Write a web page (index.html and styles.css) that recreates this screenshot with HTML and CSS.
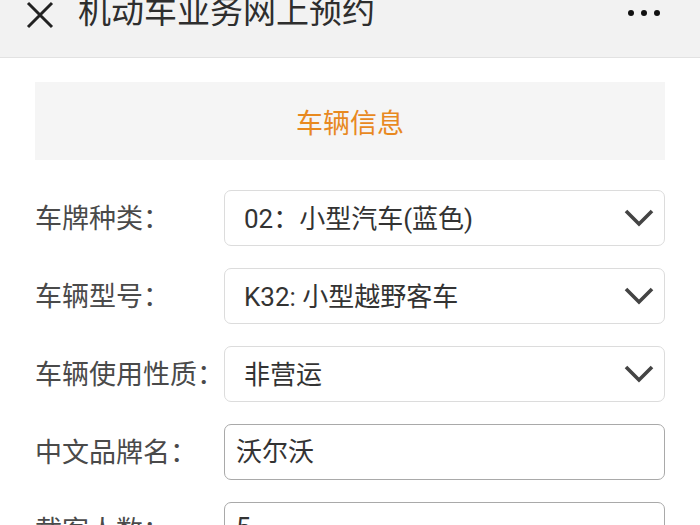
FILE: index.html
```html
<!DOCTYPE html>
<html lang="zh-CN">
<head>
<meta charset="utf-8">
<title>机动车业务网上预约</title>
<link rel="stylesheet" href="styles.css">
</head>
<body>
<header class="topbar">
  <svg class="close" width="30" height="30" viewBox="0 0 30 30"><path d="M3 3 L27 27 M27 3 L3 27" stroke="#222" stroke-width="3" fill="none"/></svg>
  <h1 class="title">机动车业务网上预约</h1>
  <div class="more"><span></span><span></span><span></span></div>
</header>
<main class="page">
  <div class="section-head">车辆信息</div>
  <div class="form">
    <div class="row">
      <label class="label">车牌种类：</label>
      <div class="field select"><span class="value">02：小型汽车(蓝色)</span><svg class="chev" width="30" height="18" viewBox="0 0 30 18"><path d="M2 2 L15 15 L28 2" stroke="#444" stroke-width="3.6" fill="none"/></svg></div>
    </div>
    <div class="row">
      <label class="label">车辆型号：</label>
      <div class="field select"><span class="value">K32: 小型越野客车</span><svg class="chev" width="30" height="18" viewBox="0 0 30 18"><path d="M2 2 L15 15 L28 2" stroke="#444" stroke-width="3.6" fill="none"/></svg></div>
    </div>
    <div class="row">
      <label class="label">车辆使用性质：</label>
      <div class="field select"><span class="value">非营运</span><svg class="chev" width="30" height="18" viewBox="0 0 30 18"><path d="M2 2 L15 15 L28 2" stroke="#444" stroke-width="3.6" fill="none"/></svg></div>
    </div>
    <div class="row">
      <label class="label">中文品牌名：</label>
      <div class="field input"><span class="value">沃尔沃</span></div>
    </div>
    <div class="row">
      <label class="label">载客人数：</label>
      <div class="field input"><span class="value">5</span></div>
    </div>
  </div>
</main>
</body>
</html>
```
FILE: styles.css
```css
html, body {
  margin: 0;
  padding: 0;
  background: #fff;
  font-family: Roboto, "Noto Sans CJK SC", sans-serif;
  overflow: hidden;
}
.topbar {
  height: 57px;
  background: #f2f2f2;
  border-bottom: 1px solid #e2e2e2;
  display: flex;
  align-items: flex-start;
  padding: 0 25px;
  box-sizing: content-box;
}
.close {
  margin-top: 0;
  flex: none;
}
.title {
  margin: -8px 0 0 23px;
  font-size: 33px;
  line-height: 40px;
  font-weight: normal;
  color: #2e2e2e;
  flex: 1;
}
.more {
  display: flex;
  gap: 7px;
  margin-top: 10px;
  margin-right: 15px;
}
.more span {
  width: 6px;
  height: 6px;
  border-radius: 50%;
  background: #111;
}
.page {
  padding: 24px 35px 0;
}
.section-head {
  height: 78px;
  background: #f5f5f5;
  display: flex;
  align-items: center;
  justify-content: center;
  color: #e8891f;
  font-size: 27px;
}
.form {
  margin-top: 30px;
  display: flex;
  flex-direction: column;
  gap: 22px;
}
.row {
  display: flex;
  align-items: center;
}
.label {
  width: 189px;
  flex: none;
  font-size: 27px;
  color: #4a4a4a;
  padding-bottom: 3px;
}
.field {
  flex: 1;
  height: 56px;
  box-sizing: border-box;
  border-radius: 7px;
  display: flex;
  align-items: center;
  font-size: 26px;
  color: #333;
}
.select {
  border: 1.5px solid #dcdcdc;
  padding: 0 10px 3px 19px;
  justify-content: space-between;
}
.input {
  border: 1.5px solid #a9a9a9;
  padding: 0 12px 6px 11px;
}
.chev {
  flex: none;
  margin-top: 3px;
}
```
